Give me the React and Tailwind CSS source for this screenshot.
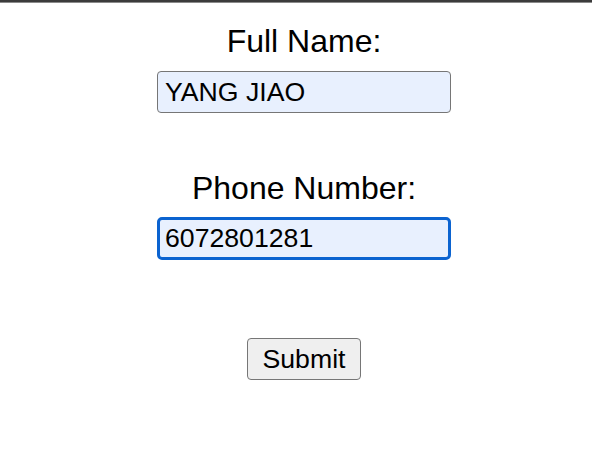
import React from 'react';

export default function App() {
  return (
    <div className="w-[592px] h-[450px] bg-white text-black font-['Liberation_Sans',Arial,sans-serif]">
      {/* top bar */}
      <div className="h-[3px] bg-[#3b3b3b] border-b border-[#8a8a8a]" />

      <form className="flex flex-col items-center pt-[20px] pl-[16px]" onSubmit={(e) => e.preventDefault()}>
        <label htmlFor="name" className="text-[32px] leading-[37px]">
          Full Name:
        </label>
        <input
          id="name"
          defaultValue="YANG JIAO"
          className="mt-[11px] w-[294px] h-[42px] pl-[7px] text-[26.67px] bg-[#e8f0fe] border border-[#767676] rounded-[4px] outline-none"
        />

        <label htmlFor="phone" className="mt-[57px] text-[32px] leading-[37px]">
          Phone Number:
        </label>
        <input
          id="phone"
          defaultValue="6072801281"
          className="mt-[10px] w-[294px] h-[43px] pl-[5px] text-[26.67px] bg-[#e8f0fe] border-[3px] border-[#0b63d0] rounded-[5px] outline-none"
        />

        <button
          type="submit"
          className="mt-[78px] w-[114px] h-[42px] text-[26.67px] bg-[#efefef] border border-[#767676] rounded-[4px]"
        >
          Submit
        </button>
      </form>
    </div>
  );
}
